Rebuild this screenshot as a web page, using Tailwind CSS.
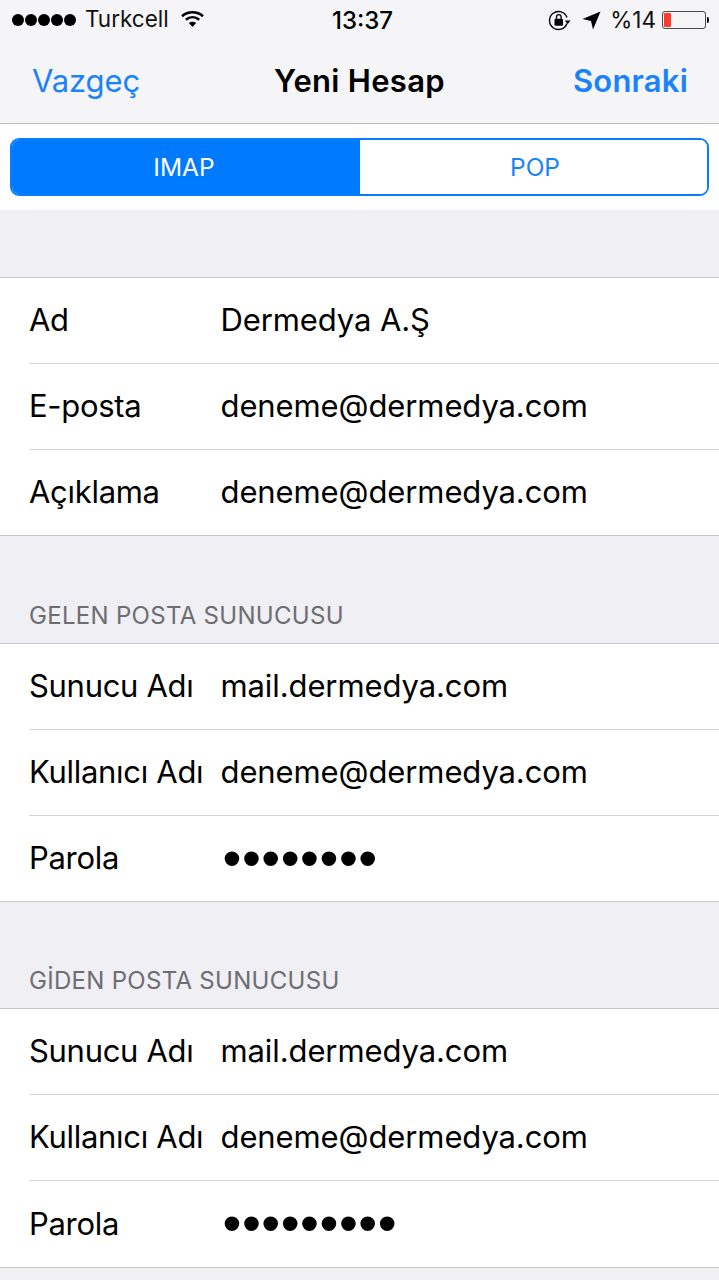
<!doctype html>
<html lang="tr">
<head>
<meta charset="UTF-8">
<title>Yeni Hesap</title>
<script src="https://cdn.jsdelivr.net/npm/@tailwindcss/browser@4"></script>
</head>
<body class="w-[719px] h-[1280px] overflow-hidden bg-[#efeff4] text-black font-['Inter','Liberation_Sans',sans-serif]">

<!-- status bar -->
<div class="h-[40px] bg-[#f5f5f8] flex items-center pl-[12px] pr-[10px] text-[22px] relative">
    <div class="flex gap-[1px]">
        <span class="w-[12px] h-[12px] rounded-full bg-black"></span>
        <span class="w-[12px] h-[12px] rounded-full bg-black"></span>
        <span class="w-[12px] h-[12px] rounded-full bg-black"></span>
        <span class="w-[12px] h-[12px] rounded-full bg-black"></span>
        <span class="w-[12px] h-[12px] rounded-full bg-black"></span>
    </div>
    <span class="ml-[9px] text-[#111] text-[22.5px] pb-[2px]">Turkcell</span>
    <svg class="ml-[12px] mb-[3px]" width="23" height="17" viewBox="0 0 23 17" fill="none" stroke="#000" stroke-width="2.6">
        <path d="M1 6.2C7 1 16 1 22 6.2"/>
        <path d="M4.8 9.8C8.8 6.4 14.2 6.4 18.2 9.8"/>
        <path d="M11.5 17L7.8 13C10 11.2 13 11.2 15.2 13Z" fill="#000" stroke="none"/>
    </svg>
    <span class="absolute left-[332px] top-[3px] text-[24px] font-medium">13:37</span>
    <div class="ml-auto flex items-center">
        <svg width="23" height="21" viewBox="0 0 23 21" fill="none">
            <path d="M19 13.5A9 9 0 1 1 19 7.5" stroke="#000" stroke-width="1.4"/>
            <path d="M16.8 10.5H22.6L19.7 14Z" fill="#000"/>
            <rect x="6.5" y="8.8" width="8.5" height="7" rx="1" fill="#000"/>
            <path d="M8.5 9V7a2.3 2.3 0 0 1 4.6 0v2" stroke="#000" stroke-width="1.3"/>
        </svg>
        <svg class="ml-[11px]" width="19" height="19" viewBox="0 0 19 19"><path d="M18.5 0.5L11 18.5L9 10L0.5 8Z" fill="#000"/></svg>
        <span class="ml-[9px] text-[22.5px] text-[#111] pb-[1px]">%14</span>
        <div class="ml-[6px] w-[44px] h-[18px] rounded-[3px] border border-black/70 p-[1px]">
            <div class="w-[7px] h-full bg-[#ff3b30] rounded-[1px]"></div>
        </div>
        <span class="w-[2px] h-[6px] bg-black rounded-r-full ml-[1px]"></span>
    </div>
</div>

<!-- nav bar -->
<div class="h-[84px] bg-[#f5f5f8] border-b border-[#bcbcc0] flex items-center justify-between px-[32px] text-[31px] relative">
    <span class="text-[#1a82fb] pb-[1px] tracking-[-0.1px]">Vazgeç</span>
    <span class="absolute left-0 right-0 text-center font-semibold pb-[1px] tracking-[0.3px]">Yeni Hesap</span>
    <span class="text-[#1a82fb] font-semibold pb-[1px] tracking-[0.2px] -mr-[1px]">Sonraki</span>
</div>

<!-- segment -->
<div class="h-[86px] bg-white pt-[14px] px-[10px]">
    <div class="h-[58px] flex text-[24.5px] rounded-[9px] border-2 border-[#0a7cff] overflow-hidden">
        <div class="w-[348px] bg-[#007aff] text-white flex items-center justify-center pt-[1px] pr-[4px]">IMAP</div>
        <div class="flex-1 bg-white text-[#1a82fb] flex items-center justify-center pt-[1px] pl-[3px]">POP</div>
    </div>
</div>

<!-- account -->
<div class="h-[67px]"></div>
<div class="bg-white border-y border-[#c8c8cc] text-[31px]">
    <div class="h-[86px] ml-[29px] border-b border-[#d4d4d6] flex items-center"><span class="w-[191.5px] tracking-[-0.3px]">Ad</span><span class="tracking-[-0.1px]">Dermedya A.Ş</span></div>
    <div class="h-[86px] ml-[29px] border-b border-[#d4d4d6] flex items-center"><span class="w-[191.5px] tracking-[-0.3px]">E-posta</span><span class="tracking-[-0.1px]">deneme@dermedya.com</span></div>
    <div class="h-[85px] ml-[29px] flex items-center"><span class="w-[191.5px] tracking-[-0.3px]">Açıklama</span><span class="tracking-[-0.1px]">deneme@dermedya.com</span></div>
</div>

<!-- incoming -->
<div class="h-[107px] flex items-end px-[29px] pb-[9px] text-[24px] tracking-[0.3px] text-[#6d6d72]">GELEN POSTA SUNUCUSU</div>
<div class="bg-white border-y border-[#c8c8cc] text-[31px]">
    <div class="h-[86px] ml-[29px] border-b border-[#d4d4d6] flex items-center"><span class="w-[191.5px] tracking-[-0.3px]">Sunucu Adı</span><span class="tracking-[-0.1px]">mail.dermedya.com</span></div>
    <div class="h-[86px] ml-[29px] border-b border-[#d4d4d6] flex items-center"><span class="w-[191.5px] whitespace-nowrap tracking-[-0.3px]">Kullanıcı Adı</span><span class="tracking-[-0.1px]">deneme@dermedya.com</span></div>
    <div class="h-[85px] ml-[29px] flex items-center"><span class="w-[191.5px] tracking-[-0.3px]">Parola</span><span class="font-['Liberation_Sans'] text-[54px] leading-none tracking-[0.5px] pb-[2px] pl-[2px]">••••••••</span></div>
</div>

<!-- outgoing -->
<div class="h-[106px] flex items-end px-[29px] pb-[9px] text-[24px] tracking-[0.3px] text-[#6d6d72]">GİDEN POSTA SUNUCUSU</div>
<div class="bg-white border-y border-[#c8c8cc] text-[31px]">
    <div class="h-[86px] ml-[29px] border-b border-[#d4d4d6] flex items-center"><span class="w-[191.5px] tracking-[-0.3px]">Sunucu Adı</span><span class="tracking-[-0.1px]">mail.dermedya.com</span></div>
    <div class="h-[86px] ml-[29px] border-b border-[#d4d4d6] flex items-center"><span class="w-[191.5px] whitespace-nowrap tracking-[-0.3px]">Kullanıcı Adı</span><span class="tracking-[-0.1px]">deneme@dermedya.com</span></div>
    <div class="h-[86px] ml-[29px] flex items-center"><span class="w-[191.5px] tracking-[-0.3px]">Parola</span><span class="font-['Liberation_Sans'] text-[54px] leading-none tracking-[0.5px] pb-[2px] pl-[2px]">•••••••••</span></div>
</div>

</body>
</html>
